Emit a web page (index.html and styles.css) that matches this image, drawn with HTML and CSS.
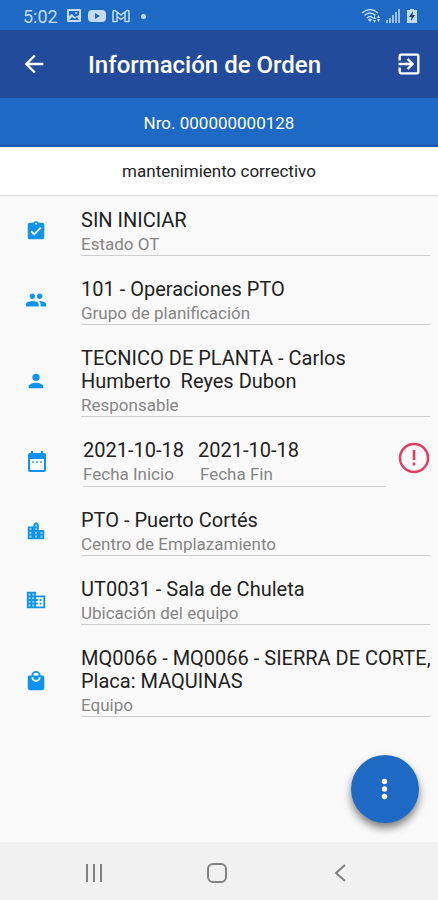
FILE: index.html
```html
<!DOCTYPE html>
<html lang="es">
<head>
<meta charset="utf-8">
<meta name="viewport" content="width=device-width, initial-scale=1">
<title>Información de Orden</title>
<link rel="stylesheet" href="styles.css">
</head>
<body>
<div class="screen">
  <div class="status">
    <span class="clock">5:02</span>
    <svg class="status-photo" width="16" height="16" viewBox="0 0 16 16"><path fill="currentColor" fill-rule="evenodd" d="M2 1h12q1 0 1 1v11q0 1-1 1H2q-1 0-1-1V2q0-1 1-1zM3 3v5l3-2 3 3 4-2V3zM3 12h10l-2-3-2 2-3-2z"/><circle cx="10" cy="5" r="1" fill="currentColor"/></svg>
    <svg class="status-video" width="18" height="14" viewBox="0 0 18 14"><path fill="currentColor" fill-rule="evenodd" d="M4 1h10q4 0 4 4v4q0 4-4 4H4q-4 0-4-4V5q0-4 4-4zm3 3v6l5-3z"/></svg>
    <svg class="status-mail" width="18" height="14" viewBox="0 0 18 14"><path fill="none" stroke="currentColor" stroke-width="1.500" stroke-linejoin="round" d="M1 12.500V3q0-2 2-1.500L9 6l6-4.500Q17 1 17 3v9.500h-4V7.500l-4 3-4-3v5zM5 3v4.500M13 3v4.500"/></svg>
    <span class="dot"></span>
    <span class="system">
      <svg width="20" height="16" viewBox="0 0 20 16"><g fill="none" stroke="currentColor" stroke-width="1.500"><path d="M1 5Q9-2 17 5M3.500 7.500q5.500-5 11 0M6 10q3-3 6 0"/></g><path fill="currentColor" d="M7 11.500q2-2 4 0L9 14zM12 11h3l-1.500-3zM12 12h3l-1.500 3zM16 10h3l-1.500-3zM16 11h3l-1.500 3z"/></svg>
      <svg width="14" height="16" viewBox="0 0 14 16"><path fill="currentColor" d="M0 12h2v3H0zM3 10h2v5H3zM6 7h2v8H6zM9 4h2v11H9zM12 1h2v14h-2z" opacity=".75"/></svg>
      <svg class="status-battery" width="10" height="16" viewBox="0 0 10 16"><path fill="currentColor" d="M3 1h4v1h3v13H0V2h3z"/><path fill="#23406b" d="M6 3 2 9h2.500L4 13l4-6H5.500z"/></svg>
    </span>
  </div>

  <header class="appbar">
    <button class="icon-btn" type="button" aria-label="Volver">
      <svg width="28" height="28" viewBox="0 0 24 24"><path fill="currentColor" d="M20 11H7.830l5.590-5.590L12 4l-8 8 8 8 1.410-1.410L7.830 13H20z"/></svg>
    </button>
    <h1>Información de Orden</h1>
    <button class="icon-btn" type="button" aria-label="Salir">
      <svg width="28" height="28" viewBox="0 0 24 24"><path fill="currentColor" d="M10.090 15.590 11.500 17l5-5-5-5-1.410 1.410L12.670 11H3v2h9.670zM19 3H5a2 2 0 0 0-2 2v4h2V5h14v14H5v-4H3v4a2 2 0 0 0 2 2h14a2 2 0 0 0 2-2V5a2 2 0 0 0-2-2z"/></svg>
    </button>
  </header>
  <div class="number">Nro. 000000000128</div>
  <div class="kind">mantenimiento correctivo</div>

  <main class="list">
    <section class="row">
      <svg class="row-icon" viewBox="0 0 24 24"><path d="M19 3h-4.180a3 3 0 0 0-5.640 0H5a2 2 0 0 0-2 2v14a2 2 0 0 0 2 2h14a2 2 0 0 0 2-2V5a2 2 0 0 0-2-2zm-7 0a1 1 0 1 1 0 2 1 1 0 0 1 0-2zm-2 14-4-4 1.410-1.410L10 14.170l6.590-6.590L18 9z"/></svg>
      <div class="field"><div class="value">SIN INICIAR</div><div class="label">Estado OT</div></div>
    </section>
    <section class="row">
      <svg class="row-icon" viewBox="0 0 24 24"><path d="M16 11c1.660 0 2.990-1.340 2.990-3S17.660 5 16 5s-3 1.340-3 3 1.340 3 3 3zm-8 0c1.660 0 2.990-1.340 2.990-3S9.660 5 8 5 5 6.340 5 8s1.340 3 3 3zm0 2c-2.330 0-7 1.170-7 3.500V19h14v-2.500C15 14.170 10.330 13 8 13zm8 0c-.29 0-.62.02-.97.05 1.160.84 1.970 1.970 1.970 3.450V19h6v-2.500c0-2.330-4.670-3.500-7-3.500z"/></svg>
      <div class="field"><div class="value">101 - Operaciones PTO</div><div class="label">Grupo de planificación</div></div>
    </section>
    <section class="row">
      <svg class="row-icon" viewBox="0 0 24 24"><path d="M12 12a4 4 0 1 0 0-8 4 4 0 0 0 0 8zm0 2c-2.670 0-8 1.340-8 4v2h16v-2c0-2.660-5.330-4-8-4z"/></svg>
      <div class="field"><div class="value">TECNICO DE PLANTA - Carlos Humberto&nbsp; Reyes Dubon</div><div class="label">Responsable</div></div>
    </section>
    <section class="row">
      <svg class="row-icon row-icon-large" viewBox="0 0 24 24"><path fill-rule="evenodd" d="M19 3h-1V1h-2v2H8V1H6v2H5a2 2 0 0 0-2 2v15a2 2 0 0 0 2 2h14a2 2 0 0 0 2-2V5a2 2 0 0 0-2-2zm0 17H5V9h14z"/><path opacity=".6" d="M7 11h2v2H7zm4 0h2v2h-2zm4 0h2v2h-2z"/></svg>
      <div class="field dates">
        <div><div class="value">2021-10-18</div><div class="label">Fecha Inicio</div></div>
        <div><div class="value">2021-10-18</div><div class="label label-end">Fecha Fin</div></div>
      </div>
      <svg class="alert" viewBox="0 0 32 32" role="img" aria-label="Orden vencida"><circle cx="16" cy="16" r="14" fill="none" stroke="currentColor" stroke-width="2.500"/><path fill="currentColor" d="M14.700 8h2.600v10h-2.600zM14.700 20.500h2.600v3h-2.600z"/></svg>
    </section>
    <section class="row">
      <svg class="row-icon" viewBox="0 0 24 24"><path opacity=".35" d="M4 8h6V5l2-2 2 2v7h6v8H4z"/><path d="M15 11V5l-3-3-3 3v2H3v14h18V11zm-8 8H5v-2h2zm0-4H5v-2h2zm0-4H5V9h2zm6 8h-2v-2h2zm0-4h-2v-2h2zm0-4h-2V9h2zm0-4h-2V5h2zm6 12h-2v-2h2zm0-4h-2v-2h2z"/></svg>
      <div class="field"><div class="value">PTO - Puerto Cortés</div><div class="label">Centro de Emplazamiento</div></div>
    </section>
    <section class="row">
      <svg class="row-icon" viewBox="0 0 24 24"><path opacity=".35" d="M3 4h8v16H3z"/><path d="M12 7V3H2v18h20V7zM6 19H4v-2h2zm0-4H4v-2h2zm0-4H4V9h2zm0-4H4V5h2zm4 12H8v-2h2zm0-4H8v-2h2zm0-4H8V9h2zm0-4H8V5h2zm10 12h-8v-2h2v-2h-2v-2h2v-2h-2V9h8zm-2-8h-2v2h2zm0 4h-2v2h2z"/></svg>
      <div class="field"><div class="value">UT0031 - Sala de Chuleta</div><div class="label">Ubicación del equipo</div></div>
    </section>
    <section class="row">
      <svg class="row-icon" viewBox="0 0 24 24"><path d="M19 6h-2a5 5 0 0 0-10 0H5a2 2 0 0 0-2 2v12a2 2 0 0 0 2 2h14a2 2 0 0 0 2-2V8a2 2 0 0 0-2-2zm-7-3a3 3 0 0 1 3 3H9a3 3 0 0 1 3-3zm0 10a5 5 0 0 1-5-5h2a3 3 0 0 0 6 0h2a5 5 0 0 1-5 5z"/></svg>
      <div class="field"><div class="value">MQ0066 - MQ0066 - SIERRA DE CORTE, Placa: MAQUINAS</div><div class="label">Equipo</div></div>
    </section>
    <button class="fab" type="button" aria-label="Más opciones">
      <svg width="30" height="30" viewBox="0 0 30 30" fill="currentColor"><circle cx="14.500" cy="7.500" r="2.700"/><circle cx="14.500" cy="15" r="2.700"/><circle cx="14.500" cy="22.500" r="2.700"/></svg>
    </button>
  </main>

  <nav class="navbar">
    <button type="button" aria-label="Recientes"><svg width="24" height="24" viewBox="0 0 24 24"><path d="M5 3v18M12 3v18M19 3v18"/></svg></button>
    <button type="button" aria-label="Inicio"><svg width="24" height="24" viewBox="0 0 24 24"><rect x="3" y="3" width="18" height="18" rx="5"/></svg></button>
    <button type="button" aria-label="Atrás"><svg width="24" height="24" viewBox="0 0 24 24"><path d="m17 4-9 8 9 8"/></svg></button>
  </nav>
</div>
</body>
</html>
```
FILE: styles.css
```css
* {
  box-sizing: border-box;
}

body {
  margin: 0;
  font-family: Roboto, "Liberation Sans", sans-serif;
  background: #fafafa;
  color: #222;
}

button {
  padding: 0;
  border: 0;
  background: none;
  color: inherit;
  cursor: pointer;
}

svg {
  display: block;
  flex: none;
}

.screen {
  display: flex;
  flex-direction: column;
  min-height: 100vh;
}

.status {
  display: flex;
  align-items: center;
  gap: 6px;
  height: 30px;
  padding: 2px 21px 0 23px;
  background: #1d69c3;
  color: #c3dbf8;
}

.clock {
  margin-right: 2px;
  font-size: 18px;
}

.dot {
  width: 5px;
  height: 5px;
  margin-left: 5px;
  border-radius: 50%;
  background: currentColor;
}

.system {
  display: flex;
  gap: 5px;
  margin-left: auto;
}

.status-battery {
  margin-left: 2px;
}

.appbar {
  display: flex;
  align-items: center;
  height: 68px;
  padding: 0 15px 0 20px;
  background: #234b9b;
  color: #fff;
}

.appbar h1 {
  flex: 1;
  margin: 0 0 0 40px;
  padding-top: 2px;
  font-size: 24px;
  font-weight: 500;
  line-height: 32px;
}

.number {
  padding: 14px 0 10px;
  border-bottom: 2px solid #0f55b5;
  background: #1d69c3;
  color: #fff;
  font-size: 17px;
  line-height: 23px;
  text-align: center;
}

.kind {
  padding: 13px 0 12px;
  border-bottom: 1px solid #dcdcdc;
  background: #fff;
  font-size: 17px;
  line-height: 23px;
  text-align: center;
}

.list {
  position: relative;
  flex: 1;
  display: flex;
  flex-direction: column;
  gap: 21px;
  padding: 12px 8px 24px 25px;
}

.row {
  display: flex;
  align-items: center;
}

.row-icon {
  width: 22px;
  height: 22px;
  margin: 0 34px 2px 0;
  fill: #1093ee;
}

.row-icon-large {
  width: 24px;
  height: 24px;
}

.field {
  flex: 1;
  min-width: 0;
  border-bottom: 1px solid #cecece;
}

.value {
  margin-right: -4px;
  padding-top: 1px;
  font-size: 20px;
  line-height: 23px;
}

.label {
  padding-top: 1px;
  color: #858585;
  font-size: 17px;
  line-height: 22px;
}

.dates {
  display: flex;
  gap: 14px;
  padding-bottom: 1px;
}

.dates .value {
  margin-right: 0;
}

.label-end {
  padding-left: 2px;
}

.alert {
  width: 32px;
  height: 32px;
  margin: 0 0 10px 12px;
  color: #e43d61;
}

.fab {
  position: absolute;
  right: 19px;
  bottom: 19px;
  display: grid;
  place-items: center;
  width: 68px;
  height: 68px;
  border-radius: 50%;
  background: #1d69c3;
  color: #fff;
  box-shadow: 0 5px 8px rgba(0, 0, 0, 0.5);
}

.navbar {
  display: flex;
  justify-content: center;
  gap: 99px;
  height: 58px;
  padding: 4px 4px 0 0;
  background: #f1f1f1;
}

.navbar svg {
  fill: none;
  stroke: #808080;
  stroke-width: 2;
}
```
